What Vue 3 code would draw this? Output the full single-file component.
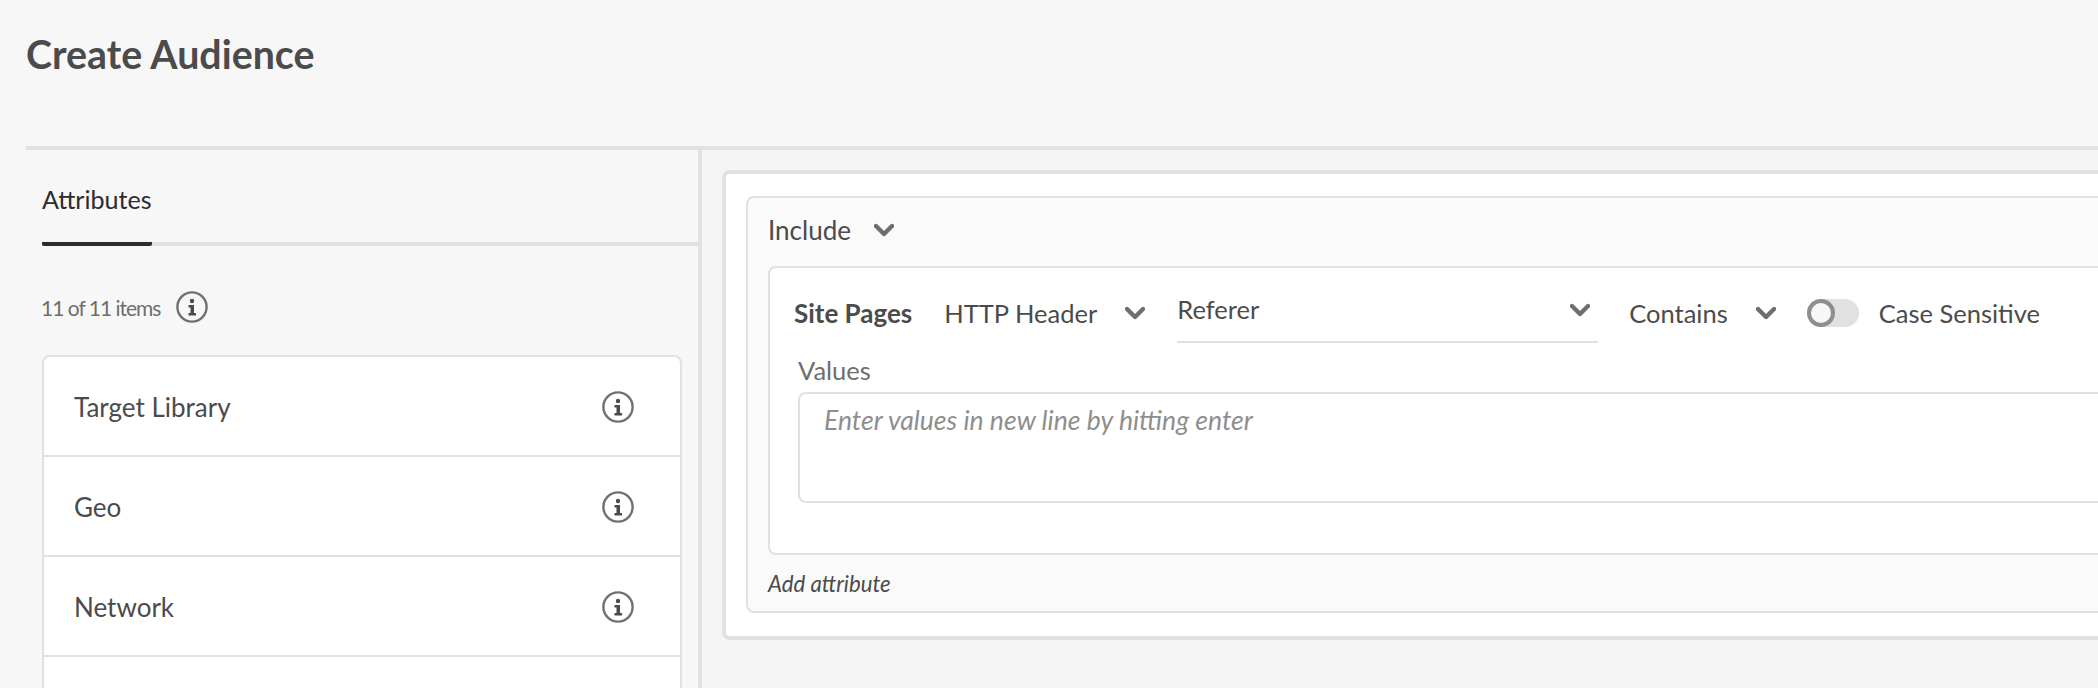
<script setup>
const rows = ['Target Library', 'Geo', 'Network', '']
</script>

<template>
  <div class="page">
    <header class="head"><h1>Create Audience</h1></header>
    <div class="cols">
      <aside class="side">
        <div class="tabs"><span class="tab">Attributes</span></div>
        <div class="count">
          <span>11 of 11 items</span>
          <svg class="info" viewBox="0 0 32 32"><circle cx="16" cy="16" r="14.600" fill="none" stroke="#707070" stroke-width="2.400"/><circle cx="16" cy="10" r="2.200" fill="#4b4b4b"/><path d="M12.500 14h5.500v8h2v2.400h-7.500v-2.400h2v-5.600h-2z" fill="#4b4b4b"/></svg>
        </div>
        <ul class="list">
          <li v-for="(r, i) in rows" :key="i" class="row">
            <span>{{ r }}</span>
            <svg v-if="r" class="info" viewBox="0 0 32 32"><circle cx="16" cy="16" r="14.600" fill="none" stroke="#707070" stroke-width="2.400"/><circle cx="16" cy="10" r="2.200" fill="#4b4b4b"/><path d="M12.500 14h5.500v8h2v2.400h-7.500v-2.400h2v-5.600h-2z" fill="#4b4b4b"/></svg>
          </li>
        </ul>
      </aside>
      <main class="main">
        <section class="panel">
          <div class="group">
            <div class="inc"><span>Include</span><svg class="chev" viewBox="0 0 20 14"><path d="M2 3l8 8 8-8" fill="none" stroke="#6e6e6e" stroke-width="4.400" stroke-linecap="round" stroke-linejoin="round"/></svg></div>
            <div class="card">
              <div class="line">
                <strong>Site Pages</strong>
                <span class="http">HTTP Header</span>
                <svg class="chev c1" viewBox="0 0 20 14"><path d="M2 3l8 8 8-8" fill="none" stroke="#6e6e6e" stroke-width="4.400" stroke-linecap="round" stroke-linejoin="round"/></svg>
                <div class="select">
                  <span class="sel-val">Referer</span>
                  <svg class="chev" viewBox="0 0 20 14"><path d="M2 3l8 8 8-8" fill="none" stroke="#6e6e6e" stroke-width="4.400" stroke-linecap="round" stroke-linejoin="round"/></svg>
                </div>
                <span class="contains">Contains</span>
                <svg class="chev c2" viewBox="0 0 20 14"><path d="M2 3l8 8 8-8" fill="none" stroke="#6e6e6e" stroke-width="4.400" stroke-linecap="round" stroke-linejoin="round"/></svg>
                <span class="toggle"><i></i></span>
                <span class="case">Case Sensitive</span>
              </div>
              <div class="values">Values</div>
              <div class="area">Enter values in new line by hitting enter</div>
            </div>
            <div class="add">Add attribute</div>
          </div>
        </section>
      </main>
    </div>
  </div>
</template>

<style>
html, body { margin: 0; background: #f7f7f7; }
</style>

<style scoped>
.page { width: 2098px; height: 688px; overflow: hidden; background: #f7f7f7; font-family: Lato, "Open Sans", sans-serif; color: #4b4b4b; font-size: 25.5px; box-sizing: border-box; padding-left: 26px; }
.head { height: 146px; border-bottom: 4px solid #e1e1e1; }
h1 { margin: 0; padding-top: 31px; font-size: 39.300px; line-height: 46px; font-weight: 700; color: #4b4b4b; }
.cols { display: flex; }
.side { width: 672px; flex: none; border-right: 4px solid #e1e1e1; height: 540px; }
.tabs { display: flex; margin-left: 16px; height: 92px; border-bottom: 4px solid #e1e1e1; }
.tab { box-sizing: border-box; height: 96px; padding-top: 31px; line-height: 36px; font-size: 25.100px; color: #2c2c2c; border-bottom: 4px solid #2c2c2c; border-radius: 0 0 2px 2px; }
.count { display: flex; align-items: center; gap: 16px; margin-left: 15px; height: 32px; margin-top: 45px; font-size: 21px; letter-spacing: -1px; color: #6e6e6e; }
.info { width: 32px; height: 32px; flex: none; }
.list { list-style: none; margin: 32px 0 0 16px; padding: 0; width: 640px; background: #fff; border: 2px solid #e1e1e1; border-radius: 8px 8px 0 0; box-sizing: border-box; }
.row { height: 100px; box-sizing: border-box; display: flex; align-items: center; justify-content: space-between; padding: 2px 46px 0 30px; border-bottom: 2px solid #e1e1e1; font-size: 26px; }
.main { flex: 1; height: 540px; background: #f5f5f5; padding: 20px 0 0 20px; box-sizing: border-box; }
.panel { width: 1700px; box-sizing: border-box; height: 470px; background: #fff; border: 4px solid #e1e1e1; border-radius: 8px; padding: 22px 20px; }
.group { height: 417px; background: #fafafa; border: 2px solid #e1e1e1; border-radius: 8px; box-sizing: border-box; padding: 0 20px; }
.inc { display: flex; align-items: center; height: 68px; padding-bottom: 4px; box-sizing: border-box; gap: 23px; font-size: 26px; }
.chev { width: 20px; height: 14px; flex: none; }
.card { height: 289px; box-sizing: border-box; background: #fff; border: 2px solid #e1e1e1; border-radius: 8px; padding: 0 24px; }
.line { display: flex; align-items: center; height: 92px; padding-bottom: 3px; box-sizing: border-box; }
strong { font-weight: 700; font-size: 26px; }
.http { margin-left: 32px; }
.c1 { margin-left: 28px; }
.select { margin: 0 0 14px 32px; width: 421px; height: 64px; border-bottom: 2px solid #e1e1e1; display: flex; align-items: center; justify-content: space-between; padding-right: 8px; box-sizing: border-box; align-self: flex-end; }
.sel-val { margin-bottom: 3px; }
.contains { margin-left: 31px; }
.c2 { margin-left: 28px; }
.toggle { margin-left: 31px; width: 52px; height: 28px; border-radius: 14px; background: #e1e1e1; position: relative; }
.toggle i { position: absolute; left: 0; top: 0; width: 28px; height: 28px; box-sizing: border-box; border: 4px solid #8e8e8e; border-radius: 50%; background: #f7f7f7; }
.case { margin-left: 20px; }
.values { margin-left: 4px; color: #6e6e6e; height: 32px; line-height: 20px; }
.area { margin: 0 0 0 4px; height: 111px; box-sizing: border-box; border: 2px solid #e1e1e1; border-radius: 8px; padding: 8px 24px; font-style: italic; color: #8e8e8e; line-height: 36px; font-size: 26.600px; }
.add { font-style: italic; font-size: 22.200px; line-height: 58px; color: #4b4b4b; }
</style>
